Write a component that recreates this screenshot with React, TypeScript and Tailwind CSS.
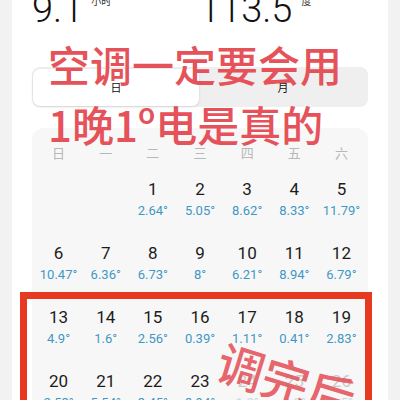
import React from "react";

const weekdays = ["日", "一", "二", "三", "四", "五", "六"];

type Cell = { d: number; v: string; faded?: boolean } | null;

const rows: Cell[][] = [
  [null, null, { d: 1, v: "2.64°" }, { d: 2, v: "5.05°" }, { d: 3, v: "8.62°" }, { d: 4, v: "8.33°" }, { d: 5, v: "11.79°" }],
  [{ d: 6, v: "10.47°" }, { d: 7, v: "6.36°" }, { d: 8, v: "6.73°" }, { d: 9, v: "8°" }, { d: 10, v: "6.21°" }, { d: 11, v: "8.94°" }, { d: 12, v: "6.79°" }],
  [{ d: 13, v: "4.9°" }, { d: 14, v: "1.6°" }, { d: 15, v: "2.56°" }, { d: 16, v: "0.39°" }, { d: 17, v: "1.11°" }, { d: 18, v: "0.41°" }, { d: 19, v: "2.83°" }],
  [{ d: 20, v: "2.53°" }, { d: 21, v: "5.54°" }, { d: 22, v: "3.45°" }, { d: 23, v: "3.94°" }, { d: 24, v: "1.2°", faded: true }, { d: 25, v: "0.8°", faded: true }, { d: 26, v: "1.5°", faded: true }],
];

const num = { fontFamily: "Roboto, 'Noto Sans', 'Noto Sans CJK SC', sans-serif" };
const cjk = { fontFamily: "'Noto Sans CJK SC', 'Noto Sans', sans-serif" };

export default function App() {
  return (
    <div className="relative w-[400px] h-[400px] overflow-hidden bg-[#f2f2f2]">
      <div className="mx-3 h-full bg-white flex flex-col">
        {/* totals */}
        <div className="flex pl-5 mt-[-10px]" style={num}>
          <div className="w-[173px] flex items-start">
            <span className="text-[38px] leading-none font-light text-[#111]">9.1</span>
            <span className="ml-[8px] mt-[6px] text-[10px] leading-none text-[#333]" style={cjk}>小时</span>
          </div>
          <div className="flex items-start ml-[-6px]">
            <span className="text-[38px] leading-none font-light text-[#111]">113.5</span>
            <span className="ml-[9px] mt-[6px] text-[10px] leading-none text-[#333]" style={cjk}>度</span>
          </div>
        </div>

        {/* day / month switch */}
        <div className="mx-5 mt-[39px] h-[40px] rounded-[8px] bg-[#efefef] flex p-[1px] pt-[2px]" style={cjk}>
          <div className="w-[166px] h-[37px] rounded-[7px] bg-white shadow-[0_1px_3px_rgba(0,0,0,0.12)] flex items-center justify-center text-[11px] text-[#111]">
            日
          </div>
          <div className="flex-1 flex items-center justify-center text-[11px] text-[#111]">月</div>
        </div>

        {/* calendar */}
        <div className="mx-5 mt-[21px] rounded-[12px] bg-[#f7f7f7] px-[3px] pt-[15px] flex-1">
          <div className="grid grid-cols-7 text-[13px] leading-[20px] text-[#b8b8b8] text-center" style={cjk}>
            {weekdays.map((w) => (
              <div key={w}>{w}</div>
            ))}
          </div>
          <div className="mt-[14px] flex flex-col" style={num}>
            {rows.map((r, i) => (
              <div key={i} className="grid grid-cols-7 h-[64px] text-center">
                {r.map((c, j) =>
                  c ? (
                    <div key={j} className="flex flex-col items-center">
                      <span className={`text-[17px] leading-[24px] ${c.faded ? "text-[#c9c9c9]" : "text-[#1c1c1c]"}`}>{c.d}</span>
                      <span className={`text-[13px] leading-[20px] ${c.faded ? "text-[#c9d9e2]" : "text-[#3f98c4]"}`}>{c.v}</span>
                    </div>
                  ) : (
                    <div key={j} />
                  )
                )}
              </div>
            ))}
          </div>
        </div>
      </div>

      {/* highlight frame */}
      <div className="absolute left-[20px] top-[292px] w-[352px] h-[140px] border-[7px] border-[#e6391f]" />

      {/* captions */}
      <div className="absolute left-[48px] top-[34px] text-[#e5525a] font-medium" style={cjk}>
        <div className="text-[42px] leading-[60px]">空调一定要会用</div>
        <div className="text-[42px] leading-[60px]">1晚1º电是真的</div>
      </div>
      <div
        className="absolute left-[226px] top-[336px] text-[47px] leading-none font-medium text-[#e5525a]/90 rotate-[17deg] origin-top-left"
        style={cjk}
      >
        调完后
      </div>
    </div>
  );
}
